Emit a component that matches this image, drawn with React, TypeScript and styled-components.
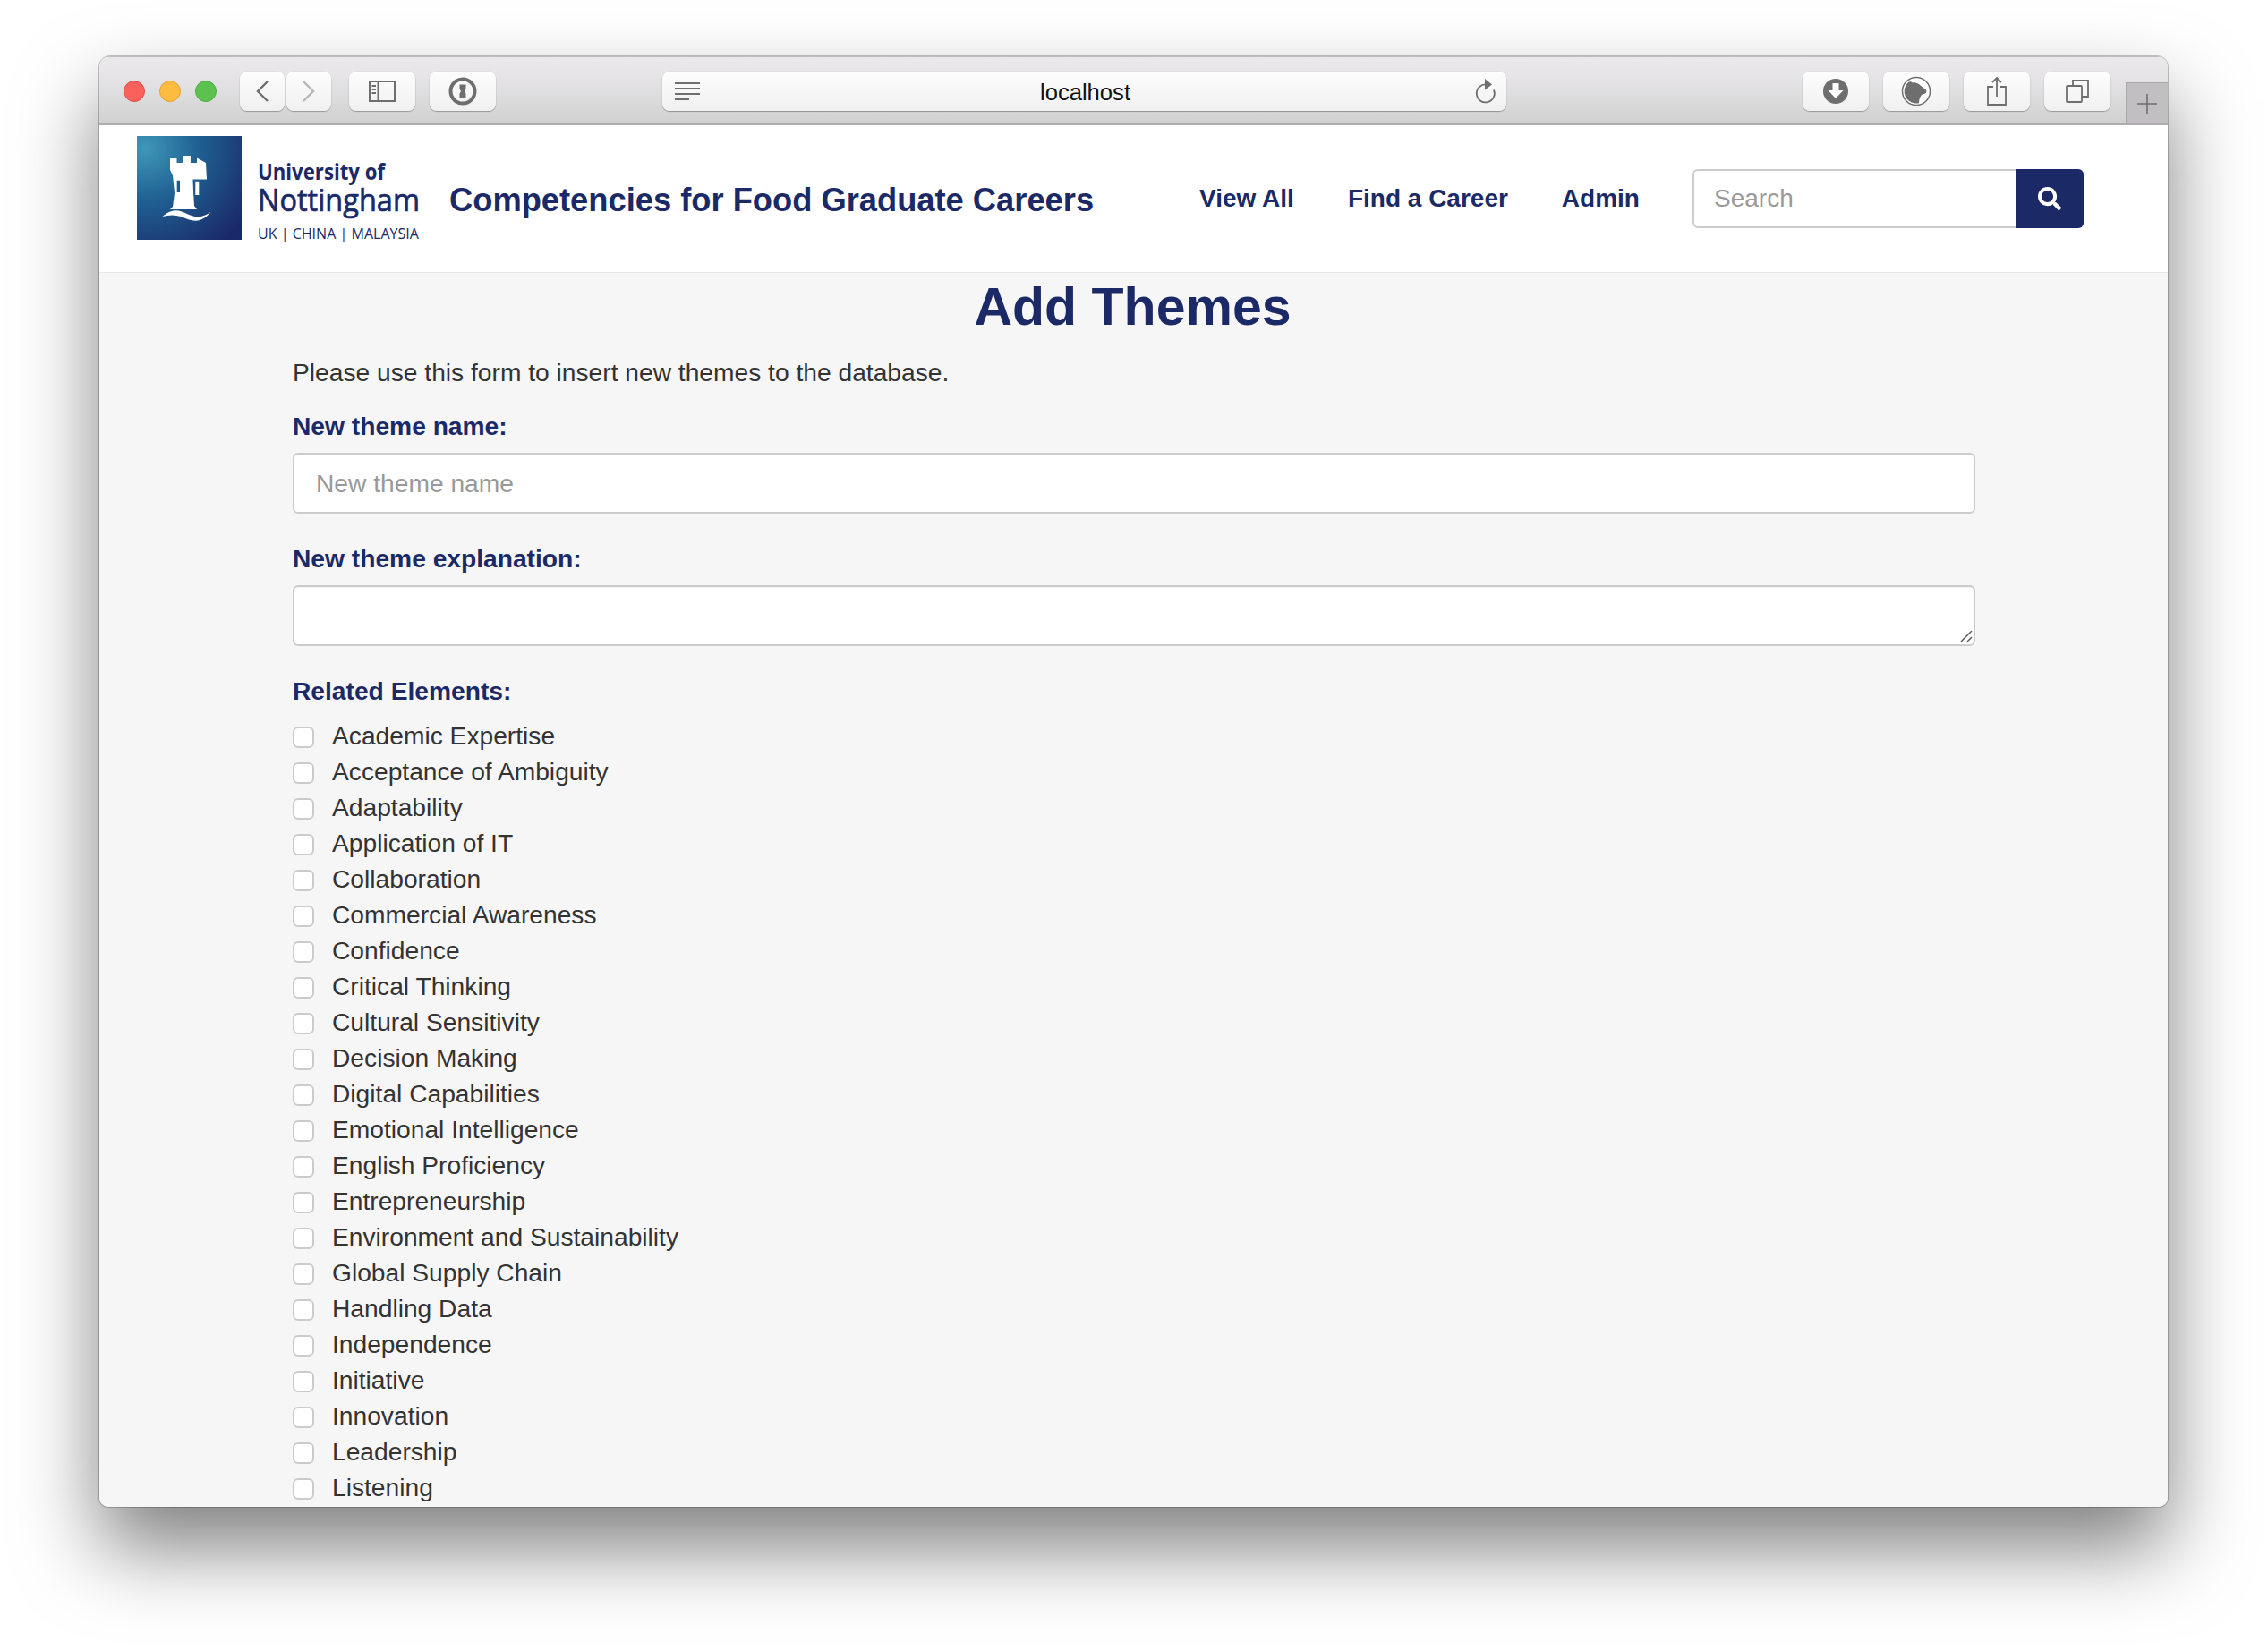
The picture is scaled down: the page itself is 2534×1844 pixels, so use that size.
import React from "react";
import styled, { createGlobalStyle } from "styled-components";
import { FaSearch } from "react-icons/fa";

const navy = "#1b2a66";
const sans = `"Liberation Sans", Arial, Helvetica, sans-serif`;

const Global = createGlobalStyle`
  html, body { margin: 0; padding: 0; background: #fff; }
  body { font-family: ${sans}; }
  * { box-sizing: border-box; }
`;

const Stage = styled.div`
  width: 2534px;
  height: 1844px;
  padding: 63px 112px 160px 111px;
  background: #fff;
  overflow: hidden;
`;

const Window = styled.div`
  height: 1621px;
  display: flex;
  flex-direction: column;
  border-radius: 12px 12px 10px 10px;
  overflow: hidden;
  background: #f6f6f6;
  box-shadow: 0 46px 90px rgba(0, 0, 0, 0.5), 0 0 0 1px rgba(0, 0, 0, 0.22);
`;

const Toolbar = styled.div`
  flex: none;
  height: 77px;
  padding: 16px 0 0 27px;
  display: flex;
  align-items: flex-start;
  background: linear-gradient(#eae8eb, #e8e6e9 20%, #d1d1d1);
  border-top: 1px solid #bdbdbd;
  border-bottom: 2px solid #adadad;
`;

const Lights = styled.div`
  display: flex;
  gap: 16px;
  margin: 10px 26px 0 0;
`;

const Light = styled.span<{ $c: string; $b: string }>`
  width: 24px;
  height: 24px;
  border-radius: 50%;
  background: ${(p) => p.$c};
  border: 1px solid ${(p) => p.$b};
`;

const Group = styled.div<{ $gap: number; $ml?: number }>`
  display: flex;
  gap: ${(p) => p.$gap}px;
  margin-left: ${(p) => p.$ml ?? 0}px;
`;

const ToolButton = styled.div<{ $w: number }>`
  width: ${(p) => p.$w}px;
  height: 44px;
  display: flex;
  align-items: center;
  justify-content: center;
  border-radius: 8px;
  background: linear-gradient(#fdfdfd, #f0f0f0);
  box-shadow: 0 1px 1px rgba(0, 0, 0, 0.28), 0 0 0 0.5px rgba(0, 0, 0, 0.06);
`;

const UrlBar = styled.div`
  width: 943px;
  height: 44px;
  margin-left: 186px;
  padding: 0 11px 0 13px;
  display: flex;
  align-items: center;
  justify-content: space-between;
  border-radius: 8px;
  background: linear-gradient(#fdfdfd, #f0f0f0);
  box-shadow: 0 1px 1px rgba(0, 0, 0, 0.3), 0 0 0 0.5px rgba(0, 0, 0, 0.06);
`;

const UrlText = styled.span`
  font-size: 25.6px;
  line-height: 44px;
  padding-top: 2px;
  margin-right: 4px;
  color: #111;
`;

const NewTab = styled.div`
  width: 47px;
  height: 46px;
  margin-left: 17px;
  align-self: flex-end;
  margin-top: auto;
  display: flex;
  align-items: center;
  justify-content: center;
  background: #c1bfc1;
  border-left: 1px solid #aaa;
  border-top: 1px solid #aaa;
`;

const Header = styled.header`
  flex: none;
  height: 165px;
  padding: 0 94px 0 42px;
  display: flex;
  align-items: center;
  background: #fff;
  border-bottom: 1px solid #e6e6e6;
`;

const LogoSvg = styled.svg`
  flex: none;
  align-self: flex-start;
  margin-top: 12px;
  width: 340px;
  height: 120px;
`;

const SiteTitle = styled.div`
  margin-left: 9px;
  font-size: 36.3px;
  font-weight: 700;
  color: ${navy};
  white-space: nowrap;
  padding-top: 3px;
`;

const Nav = styled.nav`
  margin-left: 118px;
  display: flex;
  gap: 60px;
`;

const NavLink = styled.a`
  font-size: 28px;
  font-weight: 700;
  color: ${navy};
  white-space: nowrap;
`;

const SearchBox = styled.div`
  margin-left: auto;
  width: 437px;
  height: 66px;
  display: flex;
  border: 2px solid #ccc;
  border-radius: 6px;
  background: #fff;
`;

const SearchInput = styled.input`
  flex: 1;
  min-width: 0;
  border: 0;
  outline: 0;
  background: transparent;
  padding: 0 22px;
  font: 28px ${sans};
  &::placeholder { color: #999; opacity: 1; }
`;

const SearchButton = styled.button`
  flex: none;
  width: 76px;
  margin: -2px -2px -2px 0;
  border: 0;
  border-radius: 0 6px 6px 0;
  background: ${navy};
  color: #fff;
  display: flex;
  align-items: center;
  justify-content: center;
`;

const Main = styled.main`
  flex: 1;
  min-height: 0;
  padding: 0 215px 0 216px;
  background: #f6f6f6;
`;

const Heading = styled.h1`
  margin: 0;
  padding-right: 3px;
  text-align: center;
  font-size: 59px;
  line-height: 76px;
  font-weight: 700;
  color: ${navy};
`;

const Intro = styled.p`
  margin: 15px 0 0;
  font-size: 28.2px;
  line-height: 40px;
  color: #333;
`;

const FieldLabel = styled.label<{ $mt: number }>`
  display: block;
  margin-top: ${(p) => p.$mt}px;
  font-size: 28.2px;
  line-height: 40px;
  font-weight: 700;
  color: ${navy};
`;

const TextInput = styled.input`
  display: block;
  width: 100%;
  height: 68px;
  margin-top: 10px;
  padding: 0 24px;
  border: 2px solid #ccc;
  border-radius: 6px;
  outline: 0;
  background: #fff;
  box-shadow: inset 0 1px 1px rgba(0, 0, 0, 0.06);
  font: 28.2px ${sans};
  &::placeholder { color: #999; opacity: 1; }
`;

const TextAreaWrap = styled.div`
  position: relative;
  margin-top: 10px;
`;

const TextArea = styled.textarea`
  display: block;
  width: 100%;
  height: 68px;
  padding: 12px 24px;
  border: 2px solid #ccc;
  border-radius: 6px;
  outline: 0;
  background: #fff;
  box-shadow: inset 0 1px 1px rgba(0, 0, 0, 0.06);
  font: 28px ${sans};
  resize: none;
`;

const Grip = styled.svg`
  position: absolute;
  right: 3px;
  bottom: 4px;
  width: 14px;
  height: 14px;
  fill: none;
  stroke: #5a5a5a;
  stroke-width: 1.5;
`;

const CheckList = styled.div`
  margin-top: 10px;
`;

const CheckRow = styled.label`
  display: flex;
  align-items: center;
  height: 40px;
  font-size: 28.2px;
  color: #333;
`;

const CheckBox = styled.input`
  appearance: none;
  flex: none;
  width: 24px;
  height: 24px;
  margin: 4px 20px 0 0;
  border: 2px solid #cbcbcb;
  border-radius: 6px;
  background: #fff;
`;

const Stroke = styled.svg`
  display: block;
  fill: none;
  stroke: #6e6e6e;
`;

const elements = [
  "Academic Expertise", "Acceptance of Ambiguity", "Adaptability", "Application of IT",
  "Collaboration", "Commercial Awareness", "Confidence", "Critical Thinking",
  "Cultural Sensitivity", "Decision Making", "Digital Capabilities", "Emotional Intelligence",
  "English Proficiency", "Entrepreneurship", "Environment and Sustainability", "Global Supply Chain",
  "Handling Data", "Independence", "Initiative", "Innovation", "Leadership", "Listening",
];

const Logo = () => (
  <LogoSvg viewBox="0 0 340 120">
    <defs>
      <radialGradient id="uon" cx="8%" cy="12%" r="115%">
        <stop offset="0" stopColor="#3f97b8" />
        <stop offset="0.45" stopColor="#1f5f91" />
        <stop offset="1" stopColor="#1a2969" />
      </radialGradient>
    </defs>
    <rect width="117" height="116" fill="url(#uon)" />
    <path
      fill="#fff"
      d="M37 25h7.500v5H51v-8h9v8h7v-5.500l10 5.500 1 18.500H62.500L63 61l1 17 3 4H37l3-3 2-15-2-20-3-6z"
    />
    <path fill="#1f5a8c" d="M44.700 49.700H48V63h-3.300z" />
    <path fill="#fff" d="M65.300 50.700h4V66h-4z" />
    <path fill="#fff" d="M28.500 90c6-5 13-8 20-6 9 3 16 8 23 6 4-1 8-3 11-5-3 4-7 7-12 9-8 2-14-1-21-4-7-2-14-2-21 0z" />
    <g fill={navy} fontFamily="'Open Sans', 'Noto Sans', sans-serif">
      <text x="135" y="49" fontSize="25" fontWeight="700" textLength="142" lengthAdjust="spacingAndGlyphs">University of</text>
      <text x="135" y="84" fontSize="34" fontWeight="400" stroke={navy} strokeWidth="0.7" textLength="181" lengthAdjust="spacingAndGlyphs">Nottingham</text>
      <text x="135" y="115" fontSize="17" fontWeight="400" textLength="180" lengthAdjust="spacingAndGlyphs">UK | CHINA | MALAYSIA</text>
    </g>
  </LogoSvg>
);

export default function App() {
  return (
    <Stage>
      <Global />
      <Window>
        <Toolbar>
          <Lights>
            <Light $c="#f8625a" $b="#e0504a" />
            <Light $c="#fbbc3f" $b="#e2a431" />
            <Light $c="#5bc24f" $b="#4dab42" />
          </Lights>
          <Group $gap={2}>
            <ToolButton $w={50}>
              <Stroke width="18" height="26" viewBox="0 0 18 26" strokeWidth="2.4">
                <path d="M15 2L4 13l11 11" />
              </Stroke>
            </ToolButton>
            <ToolButton $w={50}>
              <Stroke width="18" height="26" viewBox="0 0 18 26" strokeWidth="2.4" style={{ stroke: "#b5b5b5" }}>
                <path d="M3 2l11 11L3 24" />
              </Stroke>
            </ToolButton>
          </Group>
          <Group $gap={16} $ml={20}>
            <ToolButton $w={74}>
              <Stroke width="30" height="24" viewBox="0 0 30 24" strokeWidth="2">
                <rect x="1" y="1" width="28" height="22" />
                <path d="M10.500 1v22M3.500 6h4.500M3.500 10h4.500M3.500 14h4.500" />
              </Stroke>
            </ToolButton>
            <ToolButton $w={74}>
              <Stroke width="32" height="32" viewBox="0 0 32 32" strokeWidth="4">
                <circle cx="16" cy="16" r="13.500" />
                <path fill="#6e6e6e" stroke="none" d="M12.500 8.500h7v5l-1.500 2.500 1.500 2.500v5h-7v-5l1.500-2.500-1.500-2.500z" />
              </Stroke>
            </ToolButton>
          </Group>
          <UrlBar>
            <Stroke width="30" height="22" viewBox="0 0 30 22" strokeWidth="2">
              <path d="M1 2h28M1 8h28M1 14h28M1 20h16" />
            </Stroke>
            <UrlText>localhost</UrlText>
            <Stroke width="26" height="30" viewBox="0 0 26 30" strokeWidth="1.800">
              <path d="M15 7.500a10 10 0 1 0 8 6" />
              <path fill="#6e6e6e" stroke="none" d="M13 1l8 6.500-8 6z" />
            </Stroke>
          </UrlBar>
          <Group $gap={16} $ml={331}>
            <ToolButton $w={74}>
              <svg width="28" height="28" viewBox="0 0 28 28">
                <circle cx="14" cy="14" r="14" fill="#6e6e6e" />
                <path fill="#fff" d="M10.500 5h7v8h5L14 22 5.500 13h5z" />
              </svg>
            </ToolButton>
            <ToolButton $w={74}>
              <svg width="34" height="34" viewBox="0 0 34 34">
                <circle cx="17" cy="17" r="15.500" fill="#fff" stroke="#6e6e6e" strokeWidth="1.500" />
                <path fill="#6e6e6e" d="M8 7q2.500-1.500 5 .5l2-.5q5 1 8 4.500l5 4q1 3-1 4l-4 1.500q-3 3.500-3 9.200A13.500 13.500 0 0 1 8 7z" />
              </svg>
            </ToolButton>
            <ToolButton $w={74}>
              <Stroke width="24" height="34" viewBox="0 0 24 34" strokeWidth="1.800">
                <path d="M8 12H2v20h20V12h-6M12 23V2M7 7l5-5 5 5" />
              </Stroke>
            </ToolButton>
            <ToolButton $w={74}>
              <Stroke width="26" height="26" viewBox="0 0 26 26" strokeWidth="1.800">
                <rect x="1" y="7" width="17" height="18" rx="1" />
                <path d="M8 7V1h17v18h-7" />
              </Stroke>
            </ToolButton>
          </Group>
          <NewTab>
            <Stroke width="24" height="24" viewBox="0 0 24 24" strokeWidth="1.600">
              <path d="M12 1v22M1 12h22" />
            </Stroke>
          </NewTab>
        </Toolbar>
        <Header>
          <Logo />
          <SiteTitle>Competencies for Food Graduate Careers</SiteTitle>
          <Nav>
            <NavLink>View All</NavLink>
            <NavLink>Find a Career</NavLink>
            <NavLink>Admin</NavLink>
          </Nav>
          <SearchBox>
            <SearchInput placeholder="Search" />
            <SearchButton aria-label="Search">
              <FaSearch size={26} />
            </SearchButton>
          </SearchBox>
        </Header>
        <Main>
          <Heading>Add Themes</Heading>
          <Intro>Please use this form to insert new themes to the database.</Intro>
          <FieldLabel $mt={20}>New theme name:</FieldLabel>
          <TextInput placeholder="New theme name" />
          <FieldLabel $mt={30}>New theme explanation:</FieldLabel>
          <TextAreaWrap>
            <TextArea />
            <Grip viewBox="0 0 14 14">
              <path d="M1 13L13 1M8 13l5-5" />
            </Grip>
          </TextAreaWrap>
          <FieldLabel $mt={30}>Related Elements:</FieldLabel>
          <CheckList>
            {elements.map((name) => (
              <CheckRow key={name}>
                <CheckBox type="checkbox" />
                {name}
              </CheckRow>
            ))}
          </CheckList>
        </Main>
      </Window>
    </Stage>
  );
}
